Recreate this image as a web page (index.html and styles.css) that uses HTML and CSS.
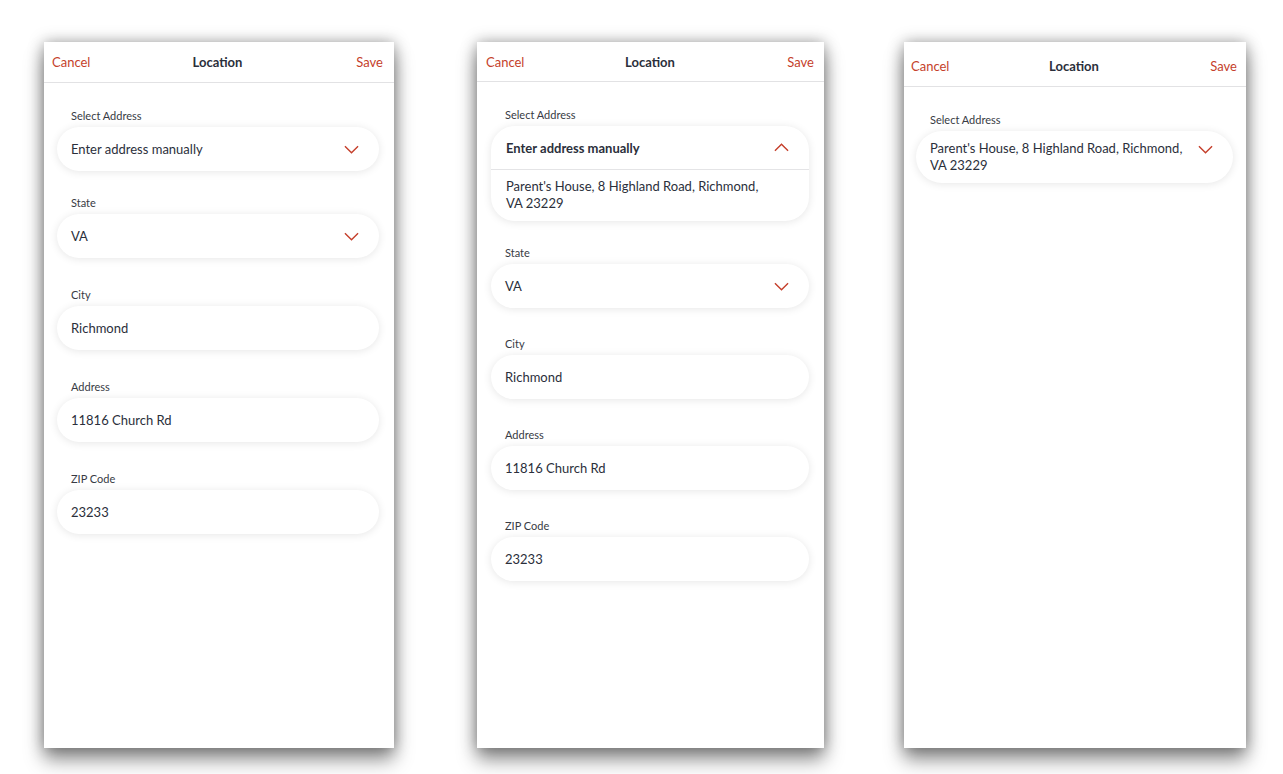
FILE: index.html
```html
<!DOCTYPE html>
<html lang="en">
  <head>
    <meta charset="UTF-8" />
    <meta name="viewport" content="width=device-width, initial-scale=1.0" />
    <title>Location</title>
    <link rel="stylesheet" href="styles.css">
  </head>
  <body>
    <div class="screens">

      <!-- manual entry, dropdown closed -->
      <section class="phone phone--a">
        <header class="topbar">
          <span class="topbar__action">Cancel</span>
          <span class="topbar__title">Location</span>
          <span class="topbar__action topbar__action--end">Save</span>
        </header>
        <div class="form">
          <div class="field field--first">
            <label>Select Address</label>
            <div class="box box--select">
              <span>Enter address manually</span>
              <svg class="chevron" viewBox="0 0 16 9"><path d="M1 1l7 7 7-7" /></svg>
            </div>
          </div>
          <div class="field">
            <label>State</label>
            <div class="box box--select">
              <span>VA</span>
              <svg class="chevron" viewBox="0 0 16 9"><path d="M1 1l7 7 7-7" /></svg>
            </div>
          </div>
          <div class="field">
            <label>City</label>
            <div class="box">Richmond</div>
          </div>
          <div class="field">
            <label>Address</label>
            <div class="box">11816 Church Rd</div>
          </div>
          <div class="field">
            <label>ZIP Code</label>
            <div class="box">23233</div>
          </div>
        </div>
      </section>

      <!-- dropdown open -->
      <section class="phone phone--b">
        <header class="topbar">
          <span class="topbar__action">Cancel</span>
          <span class="topbar__title">Location</span>
          <span class="topbar__action topbar__action--end">Save</span>
        </header>
        <div class="form">
          <div class="field field--first">
            <label>Select Address</label>
            <div class="dropdown">
              <div class="dropdown__head">
                <span>Enter address manually</span>
                <svg class="chevron" viewBox="0 0 16 9"><path d="M1 8l7-7 7 7" /></svg>
              </div>
              <div class="dropdown__option">Parent's House, 8 Highland Road, Richmond, VA 23229</div>
            </div>
          </div>
          <div class="field">
            <label>State</label>
            <div class="box box--select">
              <span>VA</span>
              <svg class="chevron" viewBox="0 0 16 9"><path d="M1 1l7 7 7-7" /></svg>
            </div>
          </div>
          <div class="field">
            <label>City</label>
            <div class="box">Richmond</div>
          </div>
          <div class="field">
            <label>Address</label>
            <div class="box">11816 Church Rd</div>
          </div>
          <div class="field">
            <label>ZIP Code</label>
            <div class="box">23233</div>
          </div>
        </div>
      </section>

      <!-- saved address picked -->
      <section class="phone phone--c">
        <header class="topbar topbar--tall">
          <span class="topbar__action">Cancel</span>
          <span class="topbar__title">Location</span>
          <span class="topbar__action topbar__action--end">Save</span>
        </header>
        <div class="form">
          <div class="field">
            <label>Select Address</label>
            <div class="box box--select box--multi">
              <span>Parent's House, 8 Highland Road, Richmond, VA 23229</span>
              <svg class="chevron" viewBox="0 0 16 9"><path d="M1 1l7 7 7-7" /></svg>
            </div>
          </div>
        </div>
      </section>

    </div>
  </body>
</html>
```

FILE: styles.css
```css
html,
body {
  height: 100%;
}

body {
  margin: 0;
  background: #ffffff;
  color: #2b2f3b;
  font-family: "Lato", "Open Sans", sans-serif;
  font-size: 13px;
}

.screens {
  display: flex;
  align-items: flex-start;
  box-sizing: border-box;
  min-height: 774px;
  padding: 42px 0 26px 44px;
  overflow: hidden;
}

.phone {
  height: 706px;
  background: #ffffff;
  box-shadow: 0 12px 18px rgba(0, 0, 0, 0.42), 0 0 14px rgba(0, 0, 0, 0.34);
}
.phone--a {
  width: 350px;
}
.phone--b {
  width: 347px;
  margin-left: 83px;
}
.phone--c {
  width: 342px;
  margin-left: 80px;
}

.topbar {
  display: grid;
  grid-template-columns: 1fr auto 1fr;
  align-items: center;
  height: 40px;
  padding: 0 11px 0 8px;
  border-bottom: 1px solid #e2e2e4;
}
.phone--b .topbar {
  height: 39px;
  padding: 0 10px 0 9px;
}
.topbar--tall {
  box-sizing: border-box;
  height: 45px;
  padding: 3px 9px 0 7px;
}
.topbar__action {
  color: #c53f2b;
  font-size: 13px;
}
.topbar__action--end {
  text-align: right;
}
.topbar__title {
  font-weight: 700;
  font-size: 13px;
  color: #2b2f3b;
}

.form {
  padding: 26px 15px 0 13px;
}
.phone--b .form {
  padding: 26px 15px 0 14px;
}
.phone--c .form {
  padding: 26px 13px 0 12px;
}

.field {
  margin-bottom: 30px;
}
.phone--b .field {
  margin-bottom: 29px;
}
.field--first,
.phone--b .field--first {
  margin-bottom: 25px;
}
.field label {
  display: block;
  padding-left: 14px;
  margin-bottom: 4px;
  font-size: 11px;
  line-height: 14px;
  color: #383b44;
}

.box {
  display: flex;
  align-items: center;
  height: 44px;
  padding: 0 14px;
  border-radius: 22px;
  background: #ffffff;
  box-shadow: 0 1px 8px rgba(0, 0, 0, 0.1);
  font-size: 13px;
}
.box--select {
  justify-content: space-between;
  padding-right: 20px;
}
.box--multi {
  height: auto;
  align-items: flex-start;
  padding-top: 9px;
  padding-bottom: 9px;
  border-radius: 26px;
  line-height: 17px;
}
.box--multi span {
  width: 262px;
}
.box--multi .chevron {
  margin-top: 5px;
}

.chevron {
  width: 15px;
  height: 9px;
  flex-shrink: 0;
  fill: none;
  stroke: #c53f2b;
  stroke-width: 1.5;
}

.dropdown {
  border-radius: 24px;
  background: #ffffff;
  box-shadow: 0 1px 8px rgba(0, 0, 0, 0.1);
  overflow: hidden;
}
.dropdown__head {
  display: flex;
  justify-content: space-between;
  align-items: center;
  height: 43px;
  padding: 0 20px 0 15px;
  border-bottom: 1px solid #e4e4e6;
  font-weight: 700;
}
.dropdown__option {
  padding: 8px 40px 9px 15px;
  line-height: 17px;
}
```
